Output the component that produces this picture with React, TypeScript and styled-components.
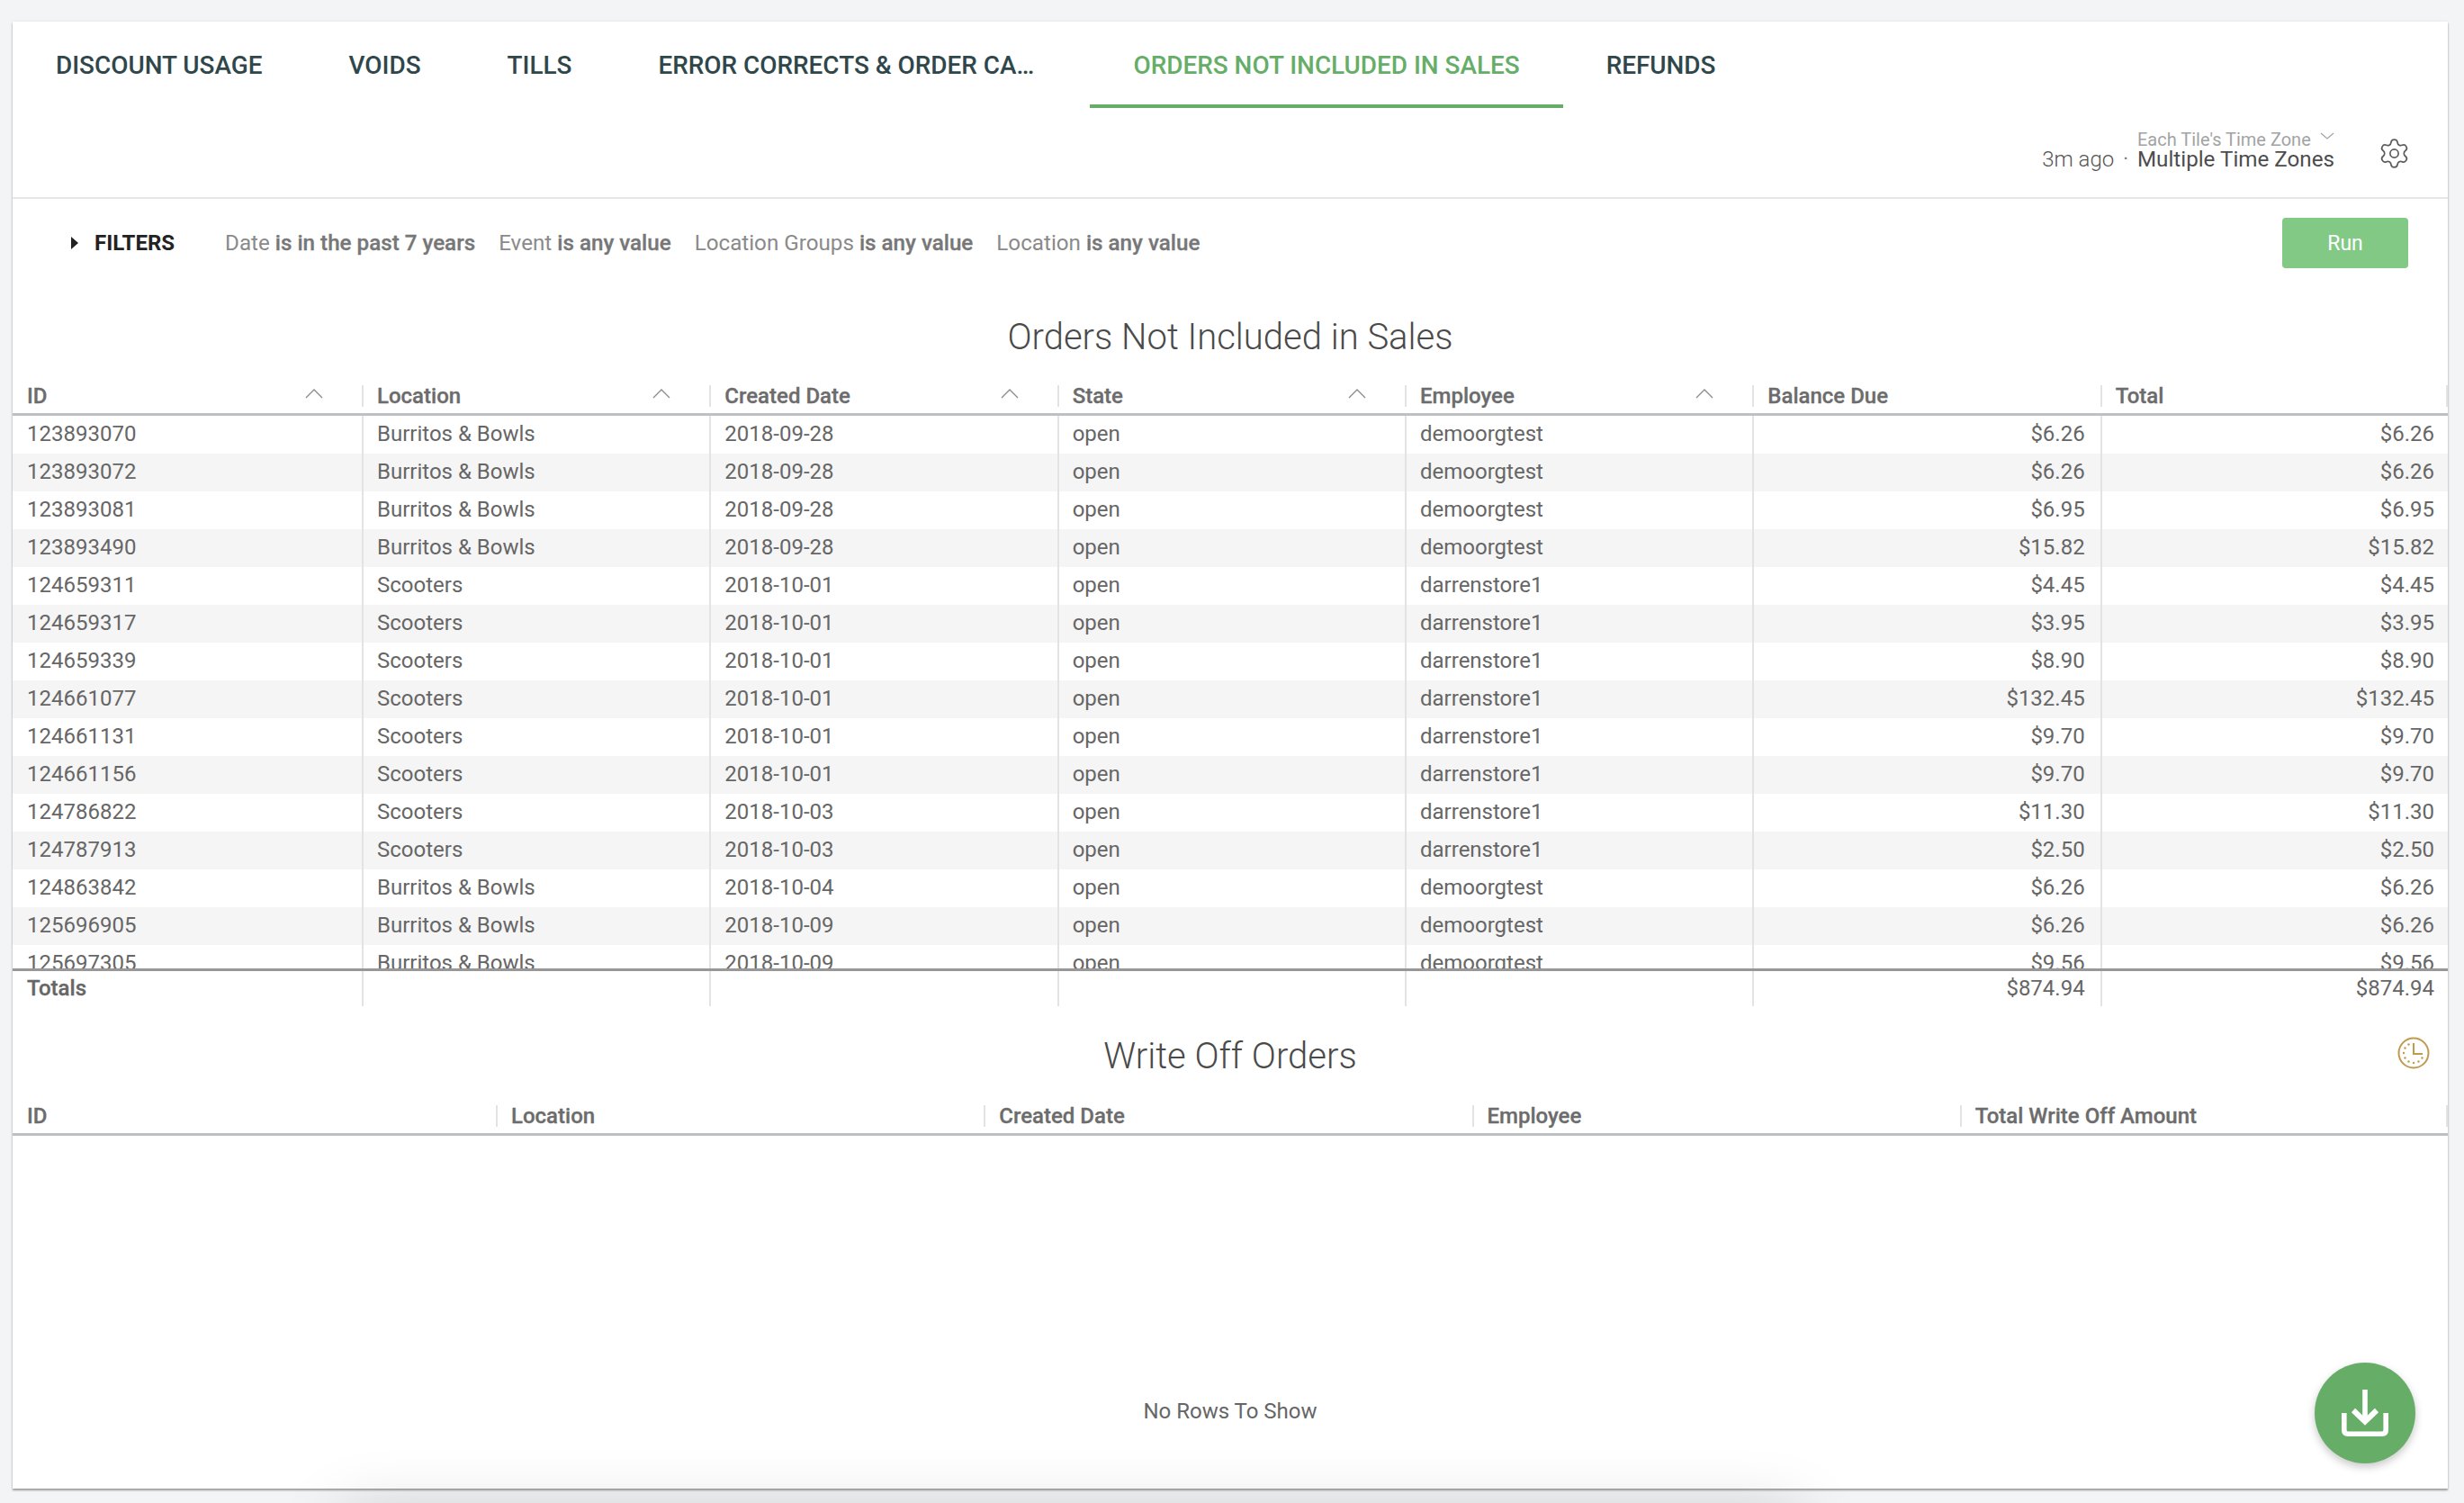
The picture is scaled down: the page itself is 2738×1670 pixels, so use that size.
import React from "react";
import styled, { createGlobalStyle } from "styled-components";
import { Settings } from "lucide-react";

const Global = createGlobalStyle`
  html, body { margin: 0; padding: 0; width: 2738px; height: 1670px; overflow: hidden; background: #f3f4f6; }
  * { box-sizing: border-box; }
  body { font-family: Roboto, "Liberation Sans", sans-serif; }
`;

const Page = styled.div`
  position: relative;
  width: 2738px;
  height: 1670px;
  padding: 24px 18px 16px 14px;
  overflow: hidden;
  background: #f3f4f6;
`;

const Card = styled.main`
  position: relative;
  display: flex;
  flex-direction: column;
  width: 2706px;
  height: 1630px;
  background: #fff;
  box-shadow: 0 2px 2px rgba(0, 0, 0, 0.35), 0 0 3px rgba(0, 0, 0, 0.08);
`;

const Tabs = styled.nav`
  display: flex;
  height: 96px;
  flex: none;
`;

const Tab = styled.div<{ $active?: boolean }>`
  display: flex;
  align-items: center;
  height: 96px;
  padding: 4px 48px 0;
  font-size: 27.9px;
  font-weight: 500;
  color: ${(p) => (p.$active ? "#66ae68" : "#2f474b")};
  border-bottom: 4px solid ${(p) => (p.$active ? "#66ae68" : "transparent")};
  white-space: nowrap;
`;

const TabLabel = styled.span<{ $clip?: boolean }>`
  display: block;
  ${(p) => p.$clip && "width: 432px; overflow: hidden; text-overflow: ellipsis;"}
`;

const StatusBar = styled.div`
  display: flex;
  align-items: flex-end;
  justify-content: flex-end;
  height: 101px;
  flex: none;
  padding: 0 41px 28px 0;
  border-bottom: 2px solid #e6e6e6;
`;

const Ago = styled.span`
  font-size: 24px;
  font-weight: 300;
  color: #555;
  line-height: 28px;
`;

const Dot = styled.span`
  font-size: 22px;
  color: #777;
  margin: 0 10px;
  line-height: 28px;
`;

const ZoneBlock = styled.div`
  display: flex;
  flex-direction: column;
  align-items: stretch;
`;

const ZoneTop = styled.div`
  display: flex;
  justify-content: space-between;
  align-items: flex-start;
  font-size: 20px;
  color: #a3a3a3;
  line-height: 22px;
`;

const ZoneMain = styled.div`
  margin-top: -3px;
  font-size: 24.2px;
  color: #4d4d4d;
  line-height: 28px;
`;

const GearWrap = styled.div`
  display: flex;
  margin: 0 0 2px 48px;
  color: #5c5c5c;
`;

const FilterRow = styled.div`
  display: flex;
  align-items: center;
  height: 98px;
  flex: none;
  padding: 0 44px 0 65px;
`;

const FiltersLabel = styled.span`
  display: flex;
  align-items: center;
  gap: 18px;
  font-size: 24px;
  font-weight: 700;
  color: #222;
  margin-right: 56px;
`;

const FilterItem = styled.span`
  font-size: 24.2px;
  color: #8a8a8a;
  margin-right: 26px;
  white-space: nowrap;
  b {
    font-weight: 500;
    color: #777;
    -webkit-text-stroke: 0.3px #777;
  }
`;

const RunButton = styled.button`
  margin-left: auto;
  width: 140px;
  height: 56px;
  border: 0;
  border-radius: 4px;
  background: #82c985;
  color: #fff;
  font: 400 23px Roboto, sans-serif;
`;

const Title = styled.h2<{ $h: number }>`
  display: flex;
  align-items: center;
  justify-content: center;
  position: relative;
  height: ${(p) => p.$h}px;
  flex: none;
  margin: 0;
  padding-top: 9px;
  font-size: 40px;
  font-weight: 300;
  color: #4a4a4a;
`;

const ClockWrap = styled.span`
  position: absolute;
  right: 20px;
  top: 34px;
  display: flex;
`;

const HeadRow = styled.div<{ $first: number; $cols: number }>`
  display: grid;
  grid-template-columns: ${(p) => p.$first}px repeat(${(p) => p.$cols - 1}, 1fr);
  align-items: center;
  height: 42px;
  flex: none;
  border-bottom: 3px solid #bdc1c4;
`;

const HeadCell = styled.div`
  display: flex;
  align-items: center;
  justify-content: space-between;
  height: 24px;
  padding-left: 15px;
  padding-right: 43px;
  border-left: 2px solid #e3e3e3;
  font-size: 24px;
  font-weight: 500;
  color: #6c6c6c;
  -webkit-text-stroke: 0.3px #6c6c6c;
  &:first-child {
    padding-left: 14px;
    border-left-color: transparent;
  }
  &:last-child {
    border-right: 2px solid #e3e3e3;
  }
  svg {
    margin-top: -5px;
  }
`;

const Body = styled.div`
  height: 614px;
  flex: none;
  overflow: hidden;
`;

const Row = styled.div<{ $alt: boolean }>`
  display: grid;
  grid-template-columns: 388px repeat(6, 1fr);
  height: 42px;
  background: ${(p) => (p.$alt ? "#f5f5f5" : "#fff")};
`;

const Cell = styled.div<{ $right?: boolean }>`
  display: flex;
  align-items: center;
  justify-content: ${(p) => (p.$right ? "flex-end" : "flex-start")};
  padding: 0 17px 2px 15px;
  border-left: 2px solid #e3e3e3;
  font-size: 24px;
  color: #666;
  white-space: nowrap;
  &:first-child {
    padding-left: 14px;
    border-left-color: transparent;
  }
  &:last-child {
    padding-right: 15px;
  }
`;

const TotalsRow = styled.div`
  display: grid;
  grid-template-columns: 388px repeat(6, 1fr);
  height: 42px;
  flex: none;
  border-top: 3px solid #989898;
`;

const TotalCell = styled(Cell)<{ $bold?: boolean }>`
  align-items: flex-start;
  padding-top: 5px;
  line-height: 28px;
  font-weight: ${(p) => (p.$bold ? 500 : 400)};
  ${(p) => p.$bold && "-webkit-text-stroke: 0.3px #666;"}
`;

const EmptyBody = styled.div`
  display: flex;
  justify-content: center;
  flex: 1;
  padding-top: 292px;
  font-size: 24px;
  color: #666;
`;

const Fab = styled.button`
  position: absolute;
  left: 2558px;
  top: 1490px;
  width: 112px;
  height: 112px;
  padding: 0;
  display: flex;
  border: 0;
  border-radius: 50%;
  background: #66ae68;
  box-shadow: 0 4px 10px rgba(0, 0, 0, 0.22);
`;

const BottomGlow = styled.div`
  position: absolute;
  left: 400px;
  width: 1580px;
  top: 1700px;
  height: 80px;
  box-shadow: 0 0 70px 20px rgba(0, 0, 0, 0.17);
`;

const rows: string[][] = [
  ["123893070", "Burritos & Bowls", "2018-09-28", "open", "demoorgtest", "$6.26"],
  ["123893072", "Burritos & Bowls", "2018-09-28", "open", "demoorgtest", "$6.26"],
  ["123893081", "Burritos & Bowls", "2018-09-28", "open", "demoorgtest", "$6.95"],
  ["123893490", "Burritos & Bowls", "2018-09-28", "open", "demoorgtest", "$15.82"],
  ["124659311", "Scooters", "2018-10-01", "open", "darrenstore1", "$4.45"],
  ["124659317", "Scooters", "2018-10-01", "open", "darrenstore1", "$3.95"],
  ["124659339", "Scooters", "2018-10-01", "open", "darrenstore1", "$8.90"],
  ["124661077", "Scooters", "2018-10-01", "open", "darrenstore1", "$132.45"],
  ["124661131", "Scooters", "2018-10-01", "open", "darrenstore1", "$9.70"],
  ["124661156", "Scooters", "2018-10-01", "open", "darrenstore1", "$9.70"],
  ["124786822", "Scooters", "2018-10-03", "open", "darrenstore1", "$11.30"],
  ["124787913", "Scooters", "2018-10-03", "open", "darrenstore1", "$2.50"],
  ["124863842", "Burritos & Bowls", "2018-10-04", "open", "demoorgtest", "$6.26"],
  ["125696905", "Burritos & Bowls", "2018-10-09", "open", "demoorgtest", "$6.26"],
  ["125697305", "Burritos & Bowls", "2018-10-09", "open", "demoorgtest", "$9.56"],
];

const SortUp = () => (
  <svg width="20" height="11" viewBox="0 0 20 11" fill="none" stroke="#8c8c8c" strokeWidth="1.3">
    <path d="M1 10 L10 1 L19 10" />
  </svg>
);

const Clock = () => (
  <svg width="36" height="36" viewBox="0 0 36 36" fill="none" stroke="#c29a4d">
    <circle cx="18" cy="18" r="16.5" strokeWidth="2" />
    <path d="M18 7 V19 H28" strokeWidth="2" />
    <g fill="#c29a4d" stroke="none">
      <circle cx="18" cy="29" r="1.2" />
      <circle cx="7" cy="18" r="1.2" />
      <circle cx="12.5" cy="8.5" r="1.2" />
      <circle cx="8.5" cy="12.5" r="1.2" />
      <circle cx="8.5" cy="23.5" r="1.2" />
      <circle cx="12.5" cy="27.5" r="1.2" />
      <circle cx="23.5" cy="27.5" r="1.2" />
      <circle cx="27.5" cy="23.5" r="1.2" />
    </g>
  </svg>
);

const Download = () => (
  <svg width="112" height="112" viewBox="0 0 112 112" fill="none" stroke="#fff" strokeWidth="5.6">
    <path d="M56 30 V64" />
    <path d="M43 53 L56 65.5 L69 53" strokeWidth="6" />
    <path d="M32.8 56 V75 Q32.8 79.2 37 79.2 H75 Q79.2 79.2 79.2 75 V56" />
  </svg>
);

const Chevron = () => (
  <svg width="16" height="8" viewBox="0 0 16 8" fill="none" stroke="#a3a3a3" strokeWidth="1.2" style={{ marginTop: 3 }}>
    <path d="M1 1 L8 7 L15 1" />
  </svg>
);

const Caret = () => (
  <svg width="8" height="14" viewBox="0 0 8 14">
    <path d="M0 0 L8 7 L0 14 Z" fill="#222" />
  </svg>
);

export default function App() {
  return (
    <Page>
      <Global />
      <Card>
        <Tabs>
          <Tab><TabLabel>DISCOUNT USAGE</TabLabel></Tab>
          <Tab><TabLabel>VOIDS</TabLabel></Tab>
          <Tab><TabLabel>TILLS</TabLabel></Tab>
          <Tab><TabLabel $clip>ERROR CORRECTS &amp; ORDER CANCELS</TabLabel></Tab>
          <Tab $active><TabLabel>ORDERS NOT INCLUDED IN SALES</TabLabel></Tab>
          <Tab><TabLabel>REFUNDS</TabLabel></Tab>
        </Tabs>
        <StatusBar>
          <Ago>3m ago</Ago>
          <Dot>·</Dot>
          <ZoneBlock>
            <ZoneTop>Each Tile's Time Zone <Chevron /></ZoneTop>
            <ZoneMain>Multiple Time Zones</ZoneMain>
          </ZoneBlock>
          <GearWrap><Settings size={37} strokeWidth={1.1} /></GearWrap>
        </StatusBar>
        <FilterRow>
          <FiltersLabel><Caret />FILTERS</FiltersLabel>
          <FilterItem>Date <b>is in the past 7 years</b></FilterItem>
          <FilterItem>Event <b>is any value</b></FilterItem>
          <FilterItem>Location Groups <b>is any value</b></FilterItem>
          <FilterItem>Location <b>is any value</b></FilterItem>
          <RunButton>Run</RunButton>
        </FilterRow>
        <Title $h={101}>Orders Not Included in Sales</Title>
        <HeadRow $first={388} $cols={7}>
          {["ID", "Location", "Created Date", "State", "Employee"].map((h) => (
            <HeadCell key={h}>{h}<SortUp /></HeadCell>
          ))}
          <HeadCell>Balance Due</HeadCell>
          <HeadCell>Total</HeadCell>
        </HeadRow>
        <Body>
          {rows.map((r, i) => (
            <Row key={r[0]} $alt={i % 2 === 1}>
              {r.slice(0, 5).map((v, j) => <Cell key={j}>{v}</Cell>)}
              <Cell $right>{r[5]}</Cell>
              <Cell $right>{r[5]}</Cell>
            </Row>
          ))}
        </Body>
        <TotalsRow>
          <TotalCell $bold>Totals</TotalCell>
          <TotalCell /><TotalCell /><TotalCell /><TotalCell />
          <TotalCell $right>$874.94</TotalCell>
          <TotalCell $right>$874.94</TotalCell>
        </TotalsRow>
        <Title $h={102}>
          Write Off Orders
          <ClockWrap><Clock /></ClockWrap>
        </Title>
        <HeadRow $first={537} $cols={5}>
          {["ID", "Location", "Created Date", "Employee", "Total Write Off Amount"].map((h) => (
            <HeadCell key={h}>{h}</HeadCell>
          ))}
        </HeadRow>
        <EmptyBody>No Rows To Show</EmptyBody>
        <Fab aria-label="Download"><Download /></Fab>
      </Card>
      <BottomGlow />
    </Page>
  );
}
